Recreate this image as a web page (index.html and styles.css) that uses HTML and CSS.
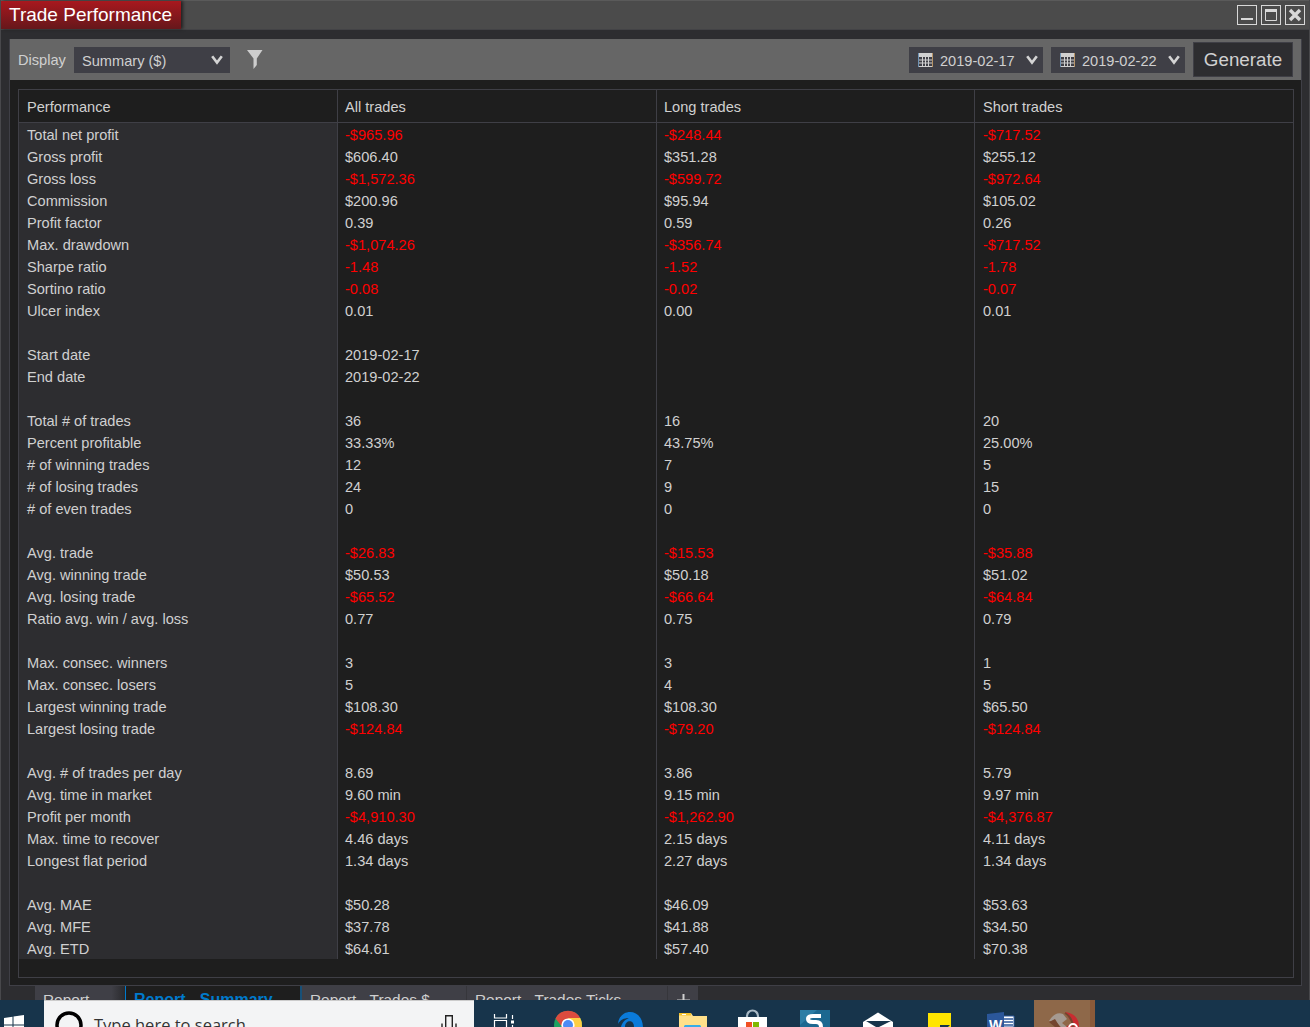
FILE: index.html
```html
<!DOCTYPE html>
<html lang="en">

<head>
	<title>Trade Performance</title>
	<meta charset="utf-8">
	<link rel="stylesheet" href="styles.css">
</head>

<body>
	<div class="window">
		<div class="titlebar">
			<h1 class="title">Trade Performance</h1>
			<div class="winbuttons">
				<svg width="20" height="20"><rect x=".5" y=".5" width="19" height="19" fill="none" stroke="#d8d8d8"/><path d="M4 14h12" stroke="#d8d8d8" stroke-width="2"/></svg>
				<svg width="20" height="20"><rect x=".5" y=".5" width="19" height="19" fill="none" stroke="#d8d8d8"/><path d="M4.5 5v10.5h11V5" fill="none" stroke="#d8d8d8"/><path d="M4 5.5h12" stroke="#d8d8d8" stroke-width="3"/></svg>
				<svg width="20" height="20"><rect x=".5" y=".5" width="19" height="19" fill="none" stroke="#d8d8d8"/><path d="M5 5l10 10M15 5L5 15" stroke="#d8d8d8" stroke-width="3.4"/></svg>
			</div>
		</div>
		<div class="panel">
			<div class="toolbar">
				<span class="label">Display</span>
				<div class="select display">
					<span>Summary ($)</span>
					<svg class="arrow" width="12" height="10"><path d="M1.2 1.3L6 7.6L10.8 1.3" fill="none" stroke="#d4d4d4" stroke-width="2.6"/></svg>
				</div>
				<svg class="filter" width="16" height="20"><path d="M0 0h15.5L9.8 8.5V15L6.5 19V8.500z" fill="#cdcdcd"/></svg>
				<div class="select date">
					<svg class="cal" width="15" height="14"><path d="M0 0h15v14H0z" fill="#d0d0d0"/><path d="M1 4h13v9H1z" fill="#3f3f46"/><path d="M4.5 4v9M7.5 4v9M10.5 4v9M1 7h13M1 10h13" stroke="#d0d0d0"/><path d="M.5 0v14" stroke="#6f93b5"/><path d="M14.5 0v14" stroke="#b89568"/></svg>
					<span>2019-02-17</span>
					<svg class="arrow" width="12" height="10"><path d="M1.2 1.3L6 7.6L10.8 1.3" fill="none" stroke="#d4d4d4" stroke-width="2.6"/></svg>
				</div>
				<div class="select date">
					<svg class="cal" width="15" height="14"><path d="M0 0h15v14H0z" fill="#d0d0d0"/><path d="M1 4h13v9H1z" fill="#3f3f46"/><path d="M4.5 4v9M7.5 4v9M10.5 4v9M1 7h13M1 10h13" stroke="#d0d0d0"/><path d="M.5 0v14" stroke="#6f93b5"/><path d="M14.5 0v14" stroke="#b89568"/></svg>
					<span>2019-02-22</span>
					<svg class="arrow" width="12" height="10"><path d="M1.2 1.3L6 7.6L10.8 1.3" fill="none" stroke="#d4d4d4" stroke-width="2.6"/></svg>
				</div>
				<button class="generate">Generate</button>
			</div>
			<div class="report">
				<table>
					<thead>
						<tr><th>Performance</th><th>All trades</th><th>Long trades</th><th>Short trades</th></tr>
					</thead>
					<tbody id="rows"></tbody>
				</table>
			</div>
		</div>
		<div class="tabs">
			<div class="tab t1">Report</div>
			<div class="tab active">Report - Summary</div>
			<div class="tab t3">Report - Trades $</div>
			<div class="tab t4">Report - Trades Ticks</div>
			<div class="tab plus"><svg width="13" height="13"><path d="M6.5 0v13M0 6.5h13" stroke="#d0d0d0" stroke-width="2"/></svg></div>
		</div>
	</div>
	<div class="taskbar">
		<div class="start"><svg width="20" height="20"><path d="M0 3l8.500-1.300V9.500H0zM9.500 1.500L20 0v9.500H9.500zM0 10.500h8.500v8L0 17.300zM9.500 10.500H20V20L9.500 18.600z" fill="#fff"/></svg></div>
		<div class="search">
			<svg width="28" height="28"><circle cx="14" cy="14" r="12" fill="none" stroke="#000" stroke-width="3.5"/></svg>
			<span>Type here to search</span>
			<svg class="mic" width="16" height="22"><path d="M4.7 14V.7h6.600V14zM1 8.500V14M15 8.500V14" fill="none" stroke="#222" stroke-width="1.4"/></svg>
		</div>
		<div class="apps">
			<!-- task view -->
			<div class="app"><svg width="61" height="27"><path d="M20.500 14v4h12v-4M20.500 27v-6.500h12V27M38.500 15v4M38.500 25v2" fill="none" stroke="#fff" stroke-width="1.2"/><path d="M37 20.500h3v3h-3z" fill="#fff"/></svg></div>
			<!-- chrome -->
			<div class="app"><svg width="61" height="27"><circle cx="33" cy="25" r="14" fill="#1da261"/><path d="M20.500 18.500A14 14 0 0 1 45.500 18.500L33 19L28 28z" fill="#dc4b3e"/><path d="M33 18h12.200A14 14 0 0 1 47 27H38z" fill="#ffce42"/><circle cx="33" cy="25" r="6.6" fill="#fff"/><circle cx="33" cy="25" r="5" fill="#4c8bf5"/></svg></div>
			<!-- edge -->
			<div class="app"><svg width="61" height="27"><path d="M21 24C22 8 45 7 46 27H37C37 19 28 20 28 27H24C25 22 29 19 32 18C27 18 23 20 21 24z" fill="#0a7bdb"/></svg></div>
			<!-- explorer -->
			<div class="app"><svg width="61" height="27"><path d="M21 13h12l2 3h14v11H21z" fill="#ffe08a"/><path d="M21 13h12v2.500H21z" fill="#f5c22b"/><path d="M24 14h4v1h-4z" fill="#fff"/><path d="M26 27v-1l1-1h15l1 1v1z" fill="#36ade8"/></svg></div>
			<!-- store -->
			<div class="app"><svg width="61" height="27"><path d="M28 18v-2a5 5 0 0 1 11 0v2" fill="none" stroke="#a9b9c5" stroke-width="2.2"/><path d="M19 17h29v10H19z" fill="#fff"/><path d="M27 22h6v5h-6z" fill="#f05022"/><path d="M34 22h6v5h-6z" fill="#7fb900"/></svg></div>
			<!-- snagit -->
			<div class="app"><svg width="61" height="27"><path d="M20 10h30v17H20z" fill="#1c6890"/><path d="M20 10h17L20 25z" fill="#2c7da5"/><path d="M41 16H33Q28 16 28 19Q28 22 33 22H36Q41 22 41 27" fill="none" stroke="#fff" stroke-width="4"/></svg></div>
			<!-- mail -->
			<div class="app"><svg width="61" height="27"><path d="M21 22l15-9.500L51 22v5H21z" fill="#fff"/><path d="M24 21h25l-12 6H34z" fill="#17344b"/></svg></div>
			<!-- notes -->
			<div class="app"><svg width="61" height="27"><path d="M25 13h23v14H25z" fill="#ffe500"/><path d="M37 25h10l-2 2H37z" fill="#17344b"/></svg></div>
			<!-- word -->
			<div class="app"><svg width="61" height="27"><path d="M34 16h16v11H34z" fill="#fff" stroke="#2b579a"/><path d="M40 19h9M40 22h9M40 25h9" stroke="#2b579a" stroke-width="1.5"/><path d="M23 14l17-2v15H23z" fill="#2b579a"/><text x="25" y="30" class="w">W</text></svg></div>
			<!-- ninjatrader -->
			<div class="app current"><svg width="56" height="27"><path d="M15 21q6-10 14-7l4 5-5 4 5 4H27l-5-5z" fill="#a59a91"/><path d="M15 22l6-3 5 8h-5z" fill="#74452f"/><path d="M31 12q14 2 14 15H32l6-4z" fill="#c92b30"/><path d="M31 13q7 4 8 14" fill="none" stroke="#74452f" stroke-width="2"/><circle cx="39" cy="28" r="4" fill="none" stroke="#fff" stroke-width="2"/></svg></div>
		</div>
	</div>
	<script src="report.js"></script>
</body>

</html>
```
FILE: report.js
```js
var rows = [
	['Total net profit', '-$965.96', '-$248.44', '-$717.52'],
	['Gross profit', '$606.40', '$351.28', '$255.12'],
	['Gross loss', '-$1,572.36', '-$599.72', '-$972.64'],
	['Commission', '$200.96', '$95.94', '$105.02'],
	['Profit factor', '0.39', '0.59', '0.26'],
	['Max. drawdown', '-$1,074.26', '-$356.74', '-$717.52'],
	['Sharpe ratio', '-1.48', '-1.52', '-1.78'],
	['Sortino ratio', '-0.08', '-0.02', '-0.07'],
	['Ulcer index', '0.01', '0.00', '0.01'],
	[],
	['Start date', '2019-02-17'],
	['End date', '2019-02-22'],
	[],
	['Total # of trades', '36', '16', '20'],
	['Percent profitable', '33.33%', '43.75%', '25.00%'],
	['# of winning trades', '12', '7', '5'],
	['# of losing trades', '24', '9', '15'],
	['# of even trades', '0', '0', '0'],
	[],
	['Avg. trade', '-$26.83', '-$15.53', '-$35.88'],
	['Avg. winning trade', '$50.53', '$50.18', '$51.02'],
	['Avg. losing trade', '-$65.52', '-$66.64', '-$64.84'],
	['Ratio avg. win / avg. loss', '0.77', '0.75', '0.79'],
	[],
	['Max. consec. winners', '3', '3', '1'],
	['Max. consec. losers', '5', '4', '5'],
	['Largest winning trade', '$108.30', '$108.30', '$65.50'],
	['Largest losing trade', '-$124.84', '-$79.20', '-$124.84'],
	[],
	['Avg. # of trades per day', '8.69', '3.86', '5.79'],
	['Avg. time in market', '9.60 min', '9.15 min', '9.97 min'],
	['Profit per month', '-$4,910.30', '-$1,262.90', '-$4,376.87'],
	['Max. time to recover', '4.46 days', '2.15 days', '4.11 days'],
	['Longest flat period', '1.34 days', '2.27 days', '1.34 days'],
	[],
	['Avg. MAE', '$50.28', '$46.09', '$53.63'],
	['Avg. MFE', '$37.78', '$41.88', '$34.50'],
	['Avg. ETD', '$64.61', '$57.40', '$70.38']
];

var body = document.getElementById('rows');
rows.forEach(function (row) {
	var tr = document.createElement('tr');
	for (var i = 0; i < 4; i++) {
		var td = document.createElement('td');
		td.textContent = row[i] || '';
		// losses in red
		if (i > 0 && td.textContent.charAt(0) == '-') {
			td.className = 'neg';
		}
		tr.appendChild(td);
	}
	body.appendChild(tr);
});
```
FILE: styles.css
```css
* {
	box-sizing: border-box;
	margin: 0;
}

body {
	width: 1310px;
	height: 1027px;
	overflow: hidden;
	background-color: #2d2d30;
	font-family: "Liberation Sans", Arial, sans-serif;
	font-size: 14.6px;
	color: #d0d0d0;
}

svg {
	display: block;
	flex: none;
}

.window {
	height: 1000px;
	overflow: hidden;
	border-left: 1px solid #48484b;
	border-right: 1px solid #48484b;
	background-color: #2d2d30;
}

.titlebar {
	display: flex;
	justify-content: space-between;
	height: 30px;
	border-top: 1px solid #5a5a5a;
	border-bottom: 1px solid #434346;
	background-color: #4b4b4b;
}

.title {
	width: 180px;
	padding-left: 8px;
	background: linear-gradient(#a8181e, #66171b);
	box-shadow: 2px 0 3px #222;
	color: #fff;
	font-size: 19px;
	font-weight: normal;
	line-height: 27px;
	white-space: nowrap;
}

.winbuttons {
	display: flex;
	gap: 4px;
	padding: 4px 4px 0 0;
}

.panel {
	width: 1293px;
	height: 947px;
	margin: 9px 0 0 8px;
	border: 1px solid #3f3f46;
	border-top: 0;
	background-color: #1e1e1e;
}

.toolbar {
	display: flex;
	align-items: center;
	height: 41px;
	padding: 0 8px;
	background-color: #666;
}

.label {
	width: 56px;
}

.select {
	display: flex;
	align-items: center;
	height: 26px;
	padding: 1px 7px 0 8px;
	background-color: #3f3f46;
}

.select span {
	padding-top: 1px;
}

.display {
	width: 156px;
}

.arrow {
	margin-left: auto;
}

.filter {
	margin: 0 auto 0 17px;
}

.date {
	width: 134px;
	margin-right: 8px;
	padding: 1px 5px 0 9px;
}

.cal {
	margin-right: 7px;
}

.generate {
	width: 100px;
	height: 35px;
	padding: 0;
	border: 1px solid #3f3f46;
	background-color: #2d2d30;
	color: #d0d0d0;
	font-family: inherit;
	font-size: 18.8px;
}

.report {
	width: 1276px;
	height: 889px;
	margin: 9px 0 0 8px;
	border: 1px solid #3f3f46;
}

table {
	width: 1274px;
	table-layout: fixed;
	border-collapse: separate;
	border-spacing: 0;
}

th {
	height: 33px;
	padding: 1px 0 0 7px;
	border-bottom: 1px solid #3f3f46;
	border-right: 1px solid #3f3f46;
	font-weight: normal;
	text-align: left;
}

td {
	height: 22px;
	padding: 1px 0 0 7px;
	border-right: 1px solid #3f3f46;
	line-height: 21px;
	padding-top: 2px;
	line-height: 20px;
	white-space: nowrap;
}

th:first-child,
td:first-child {
	width: 319px;
	padding-left: 8px;
}

th:nth-child(2) {
	width: 319px;
}

th:nth-child(3) {
	width: 318px;
}

th:last-child,
td:last-child {
	padding-left: 8px;
	border-right: 0;
}

td:first-child {
	background-color: #2d2d30;
}

.neg {
	color: #f00;
}

.tabs {
	display: flex;
	height: 30px;
	margin-left: 34px;
}

.tab {
	height: 30px;
	padding: 4px 0 0 8px;
	border-right: 1px solid #36363b;
	background-color: #3f3f46;
	font-size: 15.4px;
	line-height: 20px;
	white-space: nowrap;
}

.t1 {
	width: 90px;
	border: 0;
	background-image: linear-gradient(to right, transparent 85%, #29292c);
}

.active {
	width: 177px;
	border-left: 1px solid #007acc;
	border-right: 2px solid #175078;
	background-color: #1e1e1e;
	color: #007acc;
	font-size: 16px;
	font-weight: bold;
}

.t3 {
	width: 165px;
}

.t4 {
	width: 201px;
}

.plus {
	width: 30px;
	padding: 8px 0 0 9px;
	border: 0;
}

.taskbar {
	display: flex;
	height: 27px;
	overflow: hidden;
	background-color: #17344b;
}

.start {
	width: 44px;
	padding: 15px 0 0 4px;
}

.search {
	display: flex;
	align-items: flex-start;
	width: 430px;
	padding: 10px 17px 0 11px;
	border-top: 1px solid #ccc;
	background-color: #f3f4f5;
	color: #333;
	font-family: "Open Sans", sans-serif;
	font-size: 16.5px;
	line-height: 28px;
}

.search span {
	margin-left: 11px;
}

.mic {
	margin: 4px 0 0 auto;
}

.apps {
	display: flex;
	width: 621px;
}

.app {
	width: 61.3px;
}

.current {
	width: 61px;
	margin-left: auto;
	border-right: 5px solid #8a5a3a;
	background-color: #8e6849;
}

.w {
	fill: #fff;
	font-size: 14px;
	font-weight: bold;
}
```
